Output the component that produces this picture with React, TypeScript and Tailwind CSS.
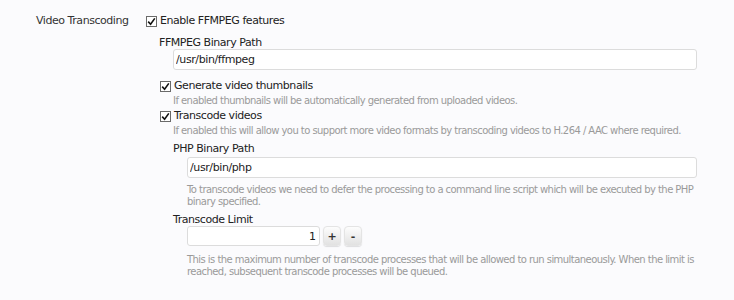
import React from "react"

const font = { fontFamily: '"DejaVu Sans", Verdana, Tahoma, sans-serif' }

function Check({ label }: { label: string }) {
  return (
    <label className="flex items-center h-[14px] text-[11px] leading-[14px] tracking-[-0.45px] text-[#222]">
      <span className="flex items-center justify-center w-[11px] h-[11px] border border-[#6a6a6a] bg-white mr-[3px]">
        <svg width="9" height="9" viewBox="0 0 9 9">
          <path d="M1.2 4.6 L3.6 7.2 L7.8 1.4" fill="none" stroke="#111" strokeWidth="1.6" />
        </svg>
      </span>
      {label}
    </label>
  )
}

function Help({ children }: { children: React.ReactNode }) {
  return <p className="text-[10px] leading-[12px] tracking-[-0.55px] text-[#9a9a9a]">{children}</p>
}

function Label({ children, className = "" }: { children: React.ReactNode; className?: string }) {
  return <div className={`text-[11px] leading-[14px] tracking-[-0.45px] text-[#222] ${className}`}>{children}</div>
}

function TextBox({ value }: { value: string }) {
  return (
    <input
      readOnly
      value={value}
      style={font}
      className="block w-full h-[21px] px-[2px] text-[11px] tracking-[-0.4px] text-[#222] bg-white border border-[#dcdcdc] rounded-[3px] outline-none"
    />
  )
}

function StepBtn({ sign }: { sign: string }) {
  return (
    <button
      style={font}
      className="w-[18px] h-[20px] text-[11px] leading-none font-bold text-[#333] rounded-[4px] border border-[#e4e4e4] shadow-[0_1px_1px_rgba(0,0,0,0.12)] bg-gradient-to-b from-[#fdfdfd] to-[#e2e2e2]"
    >
      {sign}
    </button>
  )
}

export default function App() {
  return (
    <div style={font} className="w-[734px] h-[300px] bg-[#fbfbfd] overflow-hidden">
      <div className="flex pt-[14px]">
        <div className="w-[146px] pl-[36px] text-[11px] leading-[14px] tracking-[-0.45px] text-[#333]">Video Transcoding</div>
        <div className="flex-1 pr-[37px]">
          <Check label="Enable FFMPEG features" />
          <div className="pl-[14px]">
            <Label className="mt-[8px] -ml-[1px]">FFMPEG Binary Path</Label>
            <div className="pl-[13px] mt-[-1px]">
              <TextBox value="/usr/bin/ffmpeg" />
            </div>
            <div className="mt-[9px]">
              <Check label="Generate video thumbnails" />
            </div>
            <div className="pl-[13px] mt-[2px]">
              <Help>If enabled thumbnails will be automatically generated from uploaded videos.</Help>
            </div>
            <div className="mt-[2px]">
              <Check label="Transcode videos" />
            </div>
            <div className="pl-[13px] mt-[2px]">
              <Help>If enabled this will allow you to support more video formats by transcoding videos to H.264 / AAC where required.</Help>
              <Label className="mt-[5px]">PHP Binary Path</Label>
              <div className="pl-[14px] mt-[1px]">
                <TextBox value="/usr/bin/php" />
                <div className="mt-[6px]">
                  <Help>
                    To transcode videos we need to defer the processing to a command line script which will be executed by the PHP
                    <br />
                    binary specified.
                  </Help>
                </div>
              </div>
              <Label className="mt-[5px]">Transcode Limit</Label>
              <div className="pl-[14px] mt-[-1px]">
                <div className="flex items-center gap-[3px]">
                  <input
                    readOnly
                    value="1"
                    style={font}
                    className="w-[133px] h-[20px] px-[3px] text-right text-[11px] text-[#222] bg-white border border-[#dcdcdc] rounded-[3px] outline-none"
                  />
                  <StepBtn sign="+" />
                  <StepBtn sign="-" />
                </div>
                <div className="mt-[8px]">
                  <Help>
                    This is the maximum number of transcode processes that will be allowed to run simultaneously. When the limit is
                    <br />
                    reached, subsequent transcode processes will be queued.
                  </Help>
                </div>
              </div>
            </div>
          </div>
        </div>
      </div>
    </div>
  )
}
